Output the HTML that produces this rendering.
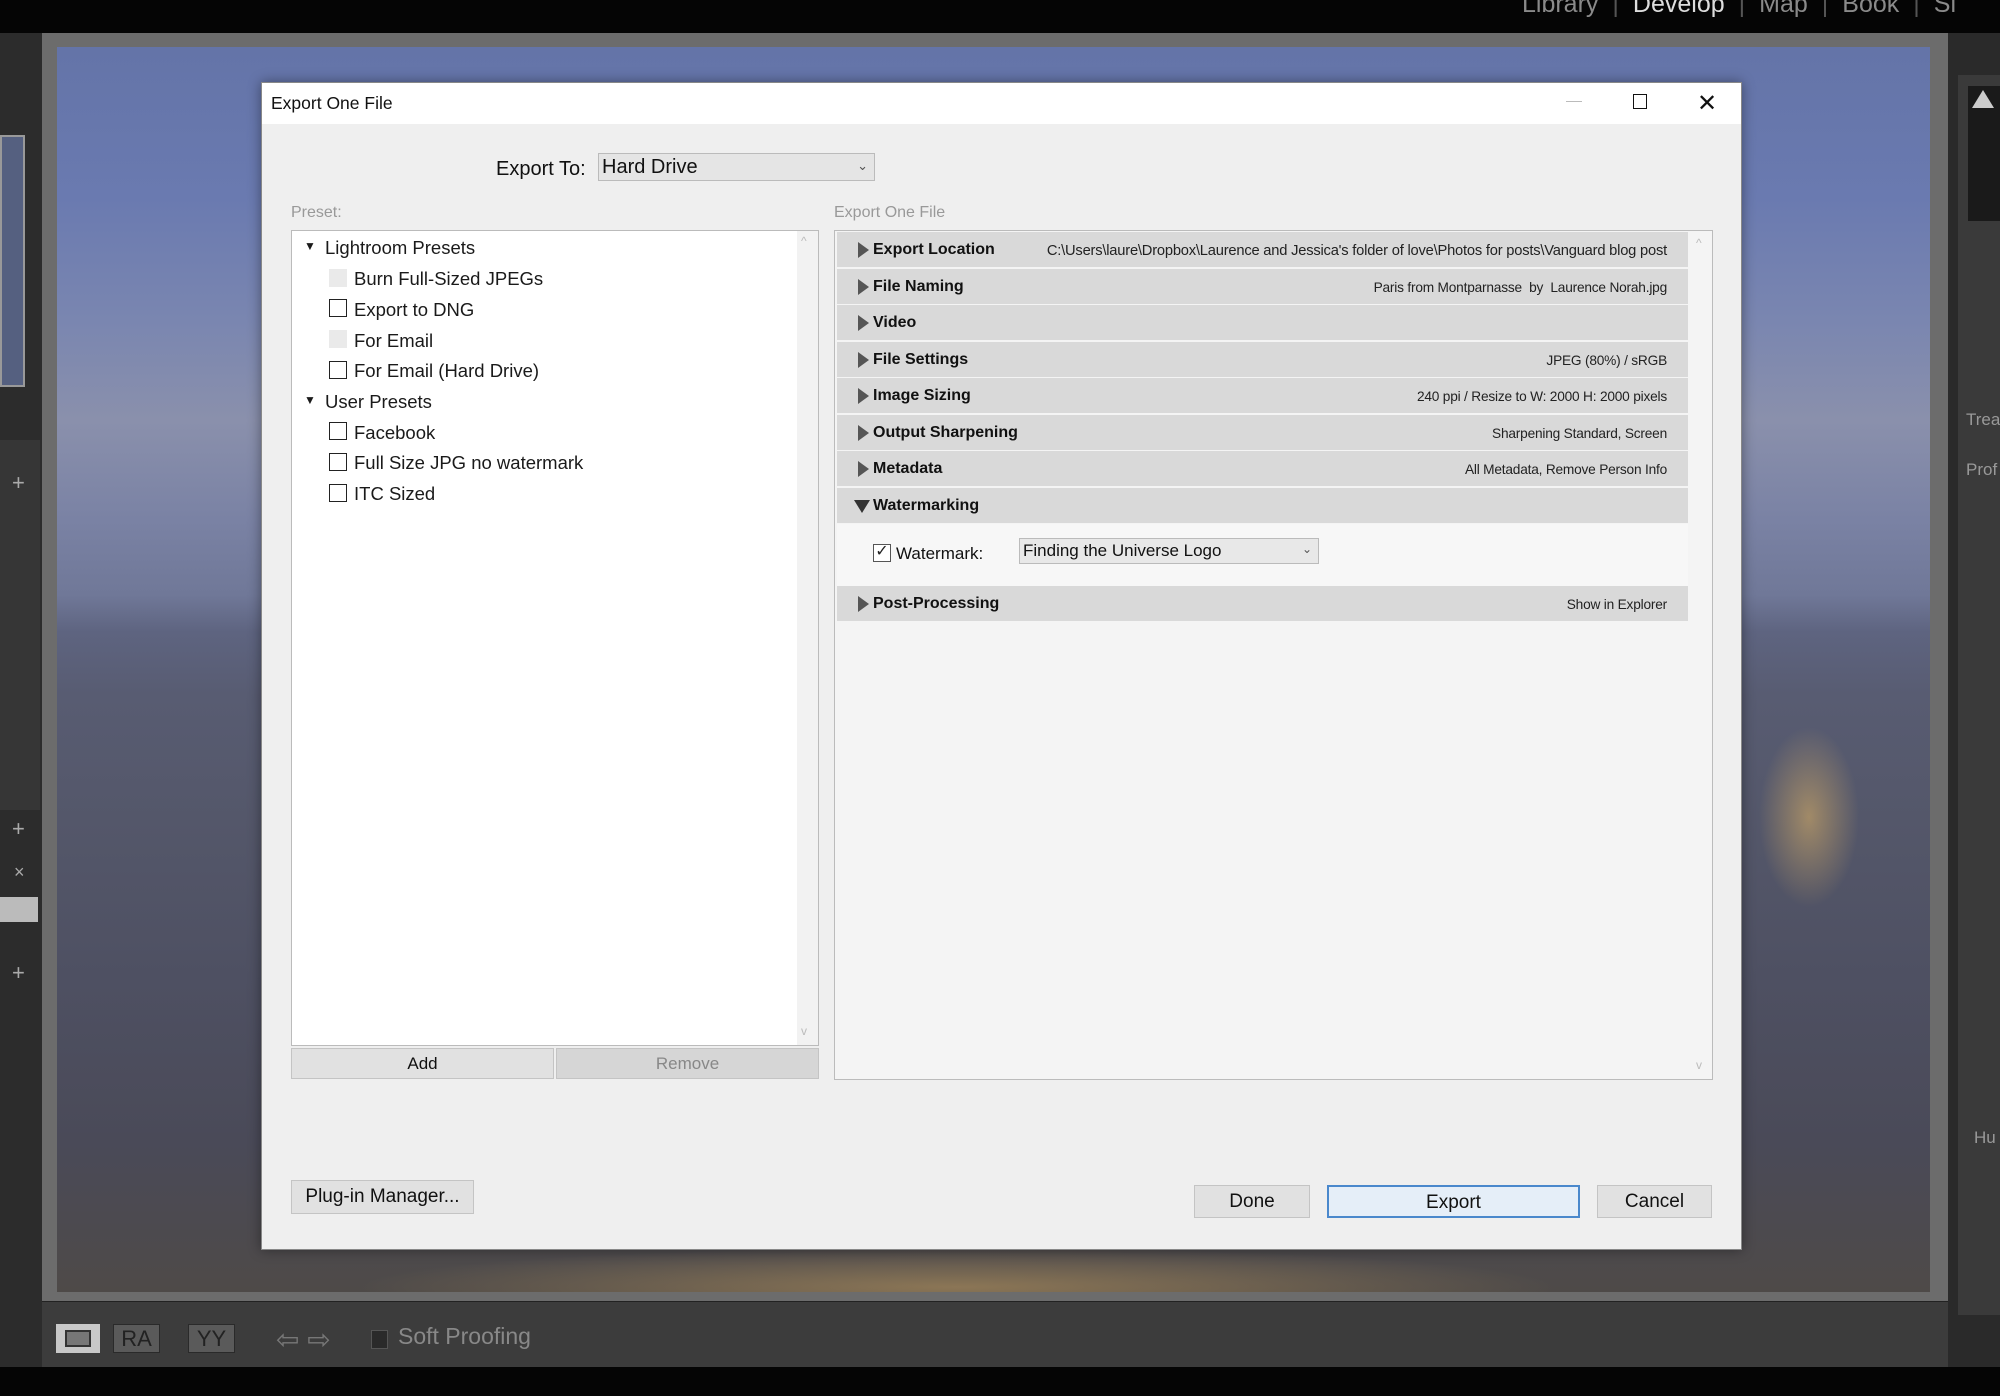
<!DOCTYPE html>
<html><head><meta charset="utf-8">
<style>
*{margin:0;padding:0;box-sizing:border-box}
body{width:2000px;height:1396px;overflow:hidden;background:#3a3a3a;font-family:"Liberation Sans",sans-serif;position:relative}
.a{position:absolute}
.photo{left:57px;top:47px;width:1873px;height:1245px;background:
radial-gradient(ellipse 50px 90px at 1752px 770px,rgba(255,200,100,.45),transparent),
radial-gradient(ellipse 600px 40px at 900px 1240px,rgba(255,200,110,.35),transparent),
linear-gradient(180deg,#6474a8 0%,#6a7ab0 12%,#7a86b0 22%,#8a90ac 30%,#7a82a4 38%,#707898 44%,#5e6480 47%,#585c72 52%,#54576a 62%,#4e5062 75%,#4a4a58 88%,#4e4a48 100%)}
.row{position:absolute;left:837px;width:851px;height:36px;background:#d9d9d9;border-bottom:1px solid #f4f4f4}
.row .t{position:absolute;left:21px;top:0;width:0;height:0;border-top:8px solid transparent;border-bottom:8px solid transparent;border-left:11px solid #555;margin-top:10px}
.row b{position:absolute;left:36px;top:9px;font-size:16px;color:#111}
.row span{position:absolute;right:21px;top:11px;font-size:13.7px;color:#222;white-space:nowrap;letter-spacing:-0.2px}
.li{position:absolute;font-size:18.5px;color:#1a1a1a;white-space:nowrap}
.cb{position:absolute;width:18px;height:18px;border:1.5px solid #222;background:#fff}
.cbd{position:absolute;width:18px;height:18px;background:#eaeaea}
.btn{position:absolute;background:#e1e1e1;border:1px solid #c4c4c4;font-size:19px;color:#111;text-align:center}
.nav span{display:inline-block;margin:0 14px}
</style></head><body>
<div class="a" style="left:0;top:0;width:2000px;height:33px;background:#050505"></div>
<div class="a nav" style="left:1508px;top:-10px;font-size:25px;color:#8a8a8a;white-space:nowrap"><span>Library</span><span style="color:#555;margin:0">|</span><span style="color:#ddd">Develop</span><span style="color:#555;margin:0">|</span><span>Map</span><span style="color:#555;margin:0">|</span><span>Book</span><span style="color:#555;margin:0">|</span><span>Sl</span></div>
<div class="a" style="left:42px;top:33px;width:1906px;height:1268px;background:#6c6c6c"></div>
<div class="photo a"></div>
<div class="a" style="left:0;top:33px;width:42px;height:1334px;background:#2c2c2c"></div>
<div class="a" style="left:0;top:135px;width:25px;height:252px;background:#556080;border:2px solid #999"></div>
<div class="a" style="left:0;top:440px;width:40px;height:370px;background:#363636"></div>
<div class="a" style="left:0;top:897px;width:38px;height:25px;background:#bbb"></div>
<div class="a" style="left:12px;top:470px;color:#aaa;font-size:22px">+</div>
<div class="a" style="left:12px;top:816px;color:#aaa;font-size:22px">+</div>
<div class="a" style="left:14px;top:862px;color:#aaa;font-size:18px">×</div>
<div class="a" style="left:12px;top:960px;color:#aaa;font-size:22px">+</div>
<div class="a" style="left:1948px;top:33px;width:52px;height:1334px;background:#2a2a2a"></div>
<div class="a" style="left:1958px;top:75px;width:42px;height:1240px;background:#3a3a3a"></div>
<div class="a" style="left:1968px;top:86px;width:32px;height:135px;background:#1a1a1a"></div>
<div class="a" style="left:1972px;top:90px;width:0;height:0;border-left:11px solid transparent;border-right:11px solid transparent;border-bottom:18px solid #ccc"></div>
<div class="a" style="left:1966px;top:410px;font-size:17px;color:#999">Trea</div>
<div class="a" style="left:1966px;top:460px;font-size:17px;color:#999">Prof</div>
<div class="a" style="left:1974px;top:1128px;font-size:17px;color:#999">Hu</div>
<div class="a" style="left:42px;top:1301px;width:1906px;height:66px;background:#3c3c3c;border-top:1px solid #222"></div>
<div class="a" style="left:0;top:1367px;width:2000px;height:29px;background:#050505"></div>
<div class="a" style="left:56px;top:1324px;width:44px;height:29px;background:#c8c8c8"><div style="margin:6px 9px;width:26px;height:17px;border:2px solid #333;background:#777"></div></div>
<div class="a" style="left:113px;top:1324px;width:47px;height:29px;background:#5a5a5a;border:1px solid #2a2a2a;color:#222;font-size:22px;text-align:center;line-height:27px">RA</div>
<div class="a" style="left:188px;top:1324px;width:47px;height:29px;background:#5a5a5a;border:1px solid #2a2a2a;color:#222;font-size:22px;text-align:center;line-height:27px">YY</div>
<div class="a" style="left:276px;top:1323px;font-size:28px;color:#777">⇦ ⇨</div>
<div class="a" style="left:371px;top:1330px;width:17px;height:19px;background:#2a2a2a;border:1px solid #555"></div>
<div class="a" style="left:398px;top:1323px;font-size:23px;color:#888">Soft Proofing</div>
<div class="a" style="left:261px;top:82px;width:1481px;height:1168px;background:#efefef;border:1px solid #888;box-shadow:0 0 12px rgba(0,0,0,.4)"></div>
<div class="a" style="left:262px;top:83px;width:1479px;height:41px;background:#fff"></div>
<div class="a" style="left:271px;top:93px;font-size:17.5px;color:#111">Export One File</div>
<div class="a" style="left:1566px;top:101px;width:16px;height:1px;background:#bbb"></div>
<div class="a" style="left:1633px;top:94px;width:14px;height:15px;border:1.5px solid #111"></div>
<div class="a" style="left:1697px;top:89px;font-size:24px;color:#111;font-weight:300">✕</div>
<div class="a" style="left:496px;top:158px;font-size:20px;color:#111">Export To:</div>
<div class="a" style="left:598px;top:153px;width:277px;height:28px;background:#e5e5e5;border:1px solid #bbb;font-size:20px;color:#111;padding:2px 3px">Hard Drive<span style="position:absolute;right:6px;top:4px;font-size:13px;color:#555">&#8964;</span></div>
<div class="a" style="left:291px;top:204px;font-size:16px;color:#999">Preset:</div>
<div class="a" style="left:834px;top:204px;font-size:16px;color:#999">Export One File</div>
<div class="a" style="left:291px;top:230px;width:528px;height:816px;background:#fff;border:1px solid #bbb"></div>
<div class="a" style="left:797px;top:231px;width:21px;height:814px;background:#f2f2f2"></div>
<div class="a" style="left:801px;top:234px;font-size:12px;color:#bbb">^</div>
<div class="a" style="left:801px;top:1024px;font-size:12px;color:#bbb">v</div>
<div class="li" style="left:304px;top:239px;font-size:12px">▼</div><div class="li" style="left:325px;top:237px">Lightroom Presets</div>
<div class="cbd" style="left:329px;top:269px"></div><div class="li" style="left:354px;top:268px">Burn Full-Sized JPEGs</div>
<div class="cb" style="left:329px;top:299px"></div><div class="li" style="left:354px;top:299px">Export to DNG</div>
<div class="cbd" style="left:329px;top:330px"></div><div class="li" style="left:354px;top:330px">For Email</div>
<div class="cb" style="left:329px;top:361px"></div><div class="li" style="left:354px;top:360px">For Email (Hard Drive)</div>
<div class="li" style="left:304px;top:393px;font-size:12px">▼</div><div class="li" style="left:325px;top:391px">User Presets</div>
<div class="cb" style="left:329px;top:422px"></div><div class="li" style="left:354px;top:422px">Facebook</div>
<div class="cb" style="left:329px;top:453px"></div><div class="li" style="left:354px;top:452px">Full Size JPG no watermark</div>
<div class="cb" style="left:329px;top:484px"></div><div class="li" style="left:354px;top:483px">ITC Sized</div>
<div class="btn" style="left:291px;top:1048px;width:263px;height:31px;font-size:17px;line-height:29px">Add</div>
<div class="btn" style="left:556px;top:1048px;width:263px;height:31px;font-size:17px;line-height:29px;color:#888;background:#d6d6d6">Remove</div>
<div class="a" style="left:834px;top:230px;width:879px;height:850px;background:#f4f4f4;border:1px solid #bbb"></div>
<div class="a" style="left:1696px;top:236px;font-size:12px;color:#bbb">^</div>
<div class="a" style="left:1696px;top:1058px;font-size:12px;color:#bbb">v</div>
<div class="row" style="top:232px"><i class="t"></i><b>Export Location</b><span style="font-size:14.7px;letter-spacing:-0.2px">C:\Users\laure\Dropbox\Laurence and Jessica's folder of love\Photos for posts\Vanguard blog post</span></div>
<div class="row" style="top:269px"><i class="t"></i><b>File Naming</b><span>Paris from Montparnasse &nbsp;by &nbsp;Laurence Norah.jpg</span></div>
<div class="row" style="top:305px"><i class="t"></i><b>Video</b></div>
<div class="row" style="top:342px"><i class="t"></i><b>File Settings</b><span>JPEG (80%) / sRGB</span></div>
<div class="row" style="top:378px"><i class="t"></i><b>Image Sizing</b><span>240 ppi / Resize to W: 2000 H: 2000 pixels</span></div>
<div class="row" style="top:415px"><i class="t"></i><b>Output Sharpening</b><span>Sharpening Standard, Screen</span></div>
<div class="row" style="top:451px"><i class="t"></i><b>Metadata</b><span>All Metadata, Remove Person Info</span></div>
<div class="row" style="top:488px"><i style="position:absolute;left:17px;top:12px;border-left:8px solid transparent;border-right:8px solid transparent;border-top:13px solid #333"></i><b>Watermarking</b></div>
<div class="a" style="left:837px;top:524px;width:851px;height:62px;background:#f7f7f7"></div>
<div class="cb" style="left:873px;top:544px;font-size:16px;line-height:14px;text-align:center;color:#222;border-color:#555">✓</div>
<div class="a" style="left:896px;top:544px;font-size:17px;color:#111">Watermark:</div>
<div class="a" style="left:1019px;top:538px;width:300px;height:26px;background:#e8e8e8;border:1px solid #bbb;font-size:17px;color:#111;padding:2px 3px">Finding the Universe Logo<span style="position:absolute;right:6px;top:3px;font-size:12px;color:#555">&#8964;</span></div>
<div class="row" style="top:586px"><i class="t"></i><b>Post-Processing</b><span>Show in Explorer</span></div>
<div class="btn" style="left:291px;top:1180px;width:183px;height:34px;line-height:32px">Plug-in Manager...</div>
<div class="btn" style="left:1194px;top:1185px;width:116px;height:33px;line-height:31px">Done</div>
<div class="btn" style="left:1327px;top:1185px;width:253px;height:33px;line-height:31px;border:2px solid #4a88cc;background:#e5eef8">Export</div>
<div class="btn" style="left:1597px;top:1185px;width:115px;height:33px;line-height:31px">Cancel</div>
</body></html>
